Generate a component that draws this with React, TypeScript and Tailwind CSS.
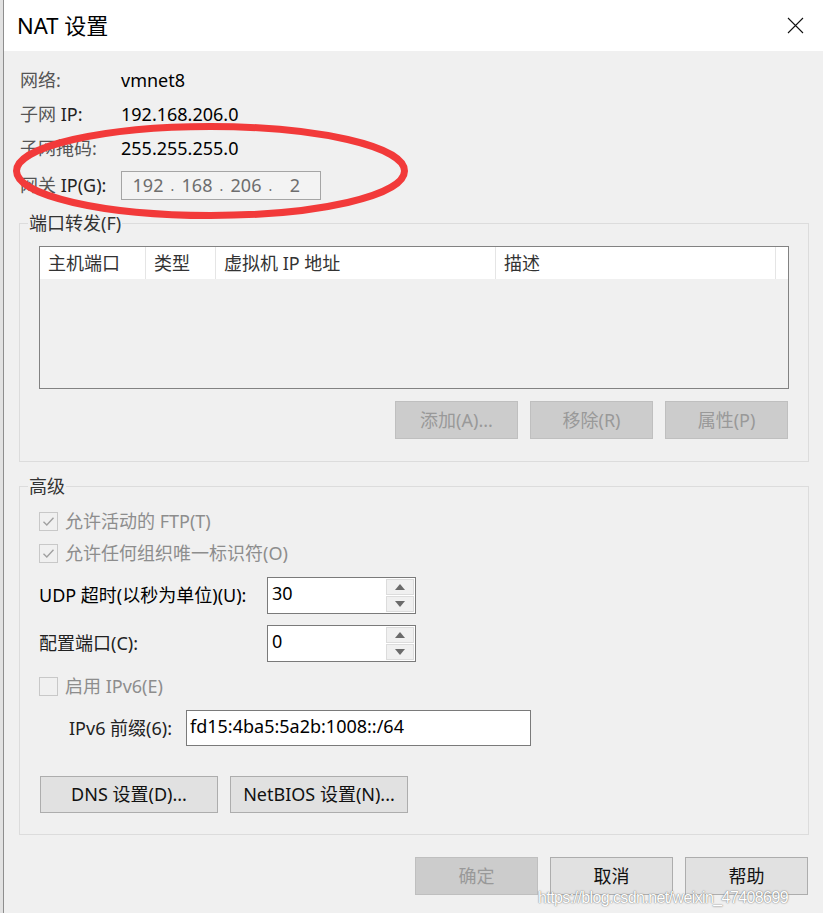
import React from "react";

const FONT = "font-['Noto_Sans','Noto_Sans_CJK_SC',sans-serif]";

function WinButton({ label, disabled, className = "" }: { label: string; disabled?: boolean; className?: string }) {
	return (
		<div
			className={`flex items-center justify-center border ${
				disabled
					? "border-[#bfbfbf] bg-[#cccccc] text-[#999]"
					: "border-[#adadad] bg-[#e1e1e1] text-[#111]"
			} ${className}`}
		>
			{label}
		</div>
	);
}

function CheckBox({ checked, label }: { checked?: boolean; label: string }) {
	return (
		<div className="flex h-[32px] items-center gap-[7px]">
			<div className="flex h-[19px] w-[19px] items-center justify-center border border-[#c8c8c8] bg-[#f0f0f0]">
				{checked && (
					<svg width="15" height="15" viewBox="0 0 15 15">
						<path d="M2.5 7.8 L5.8 11 L12.5 3.8" stroke="#a0a0a0" strokeWidth="1.4" fill="none" />
					</svg>
				)}
			</div>
			<span className="text-[#8d8d8d]">{label}</span>
		</div>
	);
}

function SpinBox({ value }: { value: string }) {
	return (
		<div className="flex h-[37px] w-[149px] border border-[#7a7a7a] bg-white">
			<div className="flex-1 pl-[4px] leading-[30px] text-black">{value}</div>
			<div className="flex w-[30px] flex-col gap-[1px] p-[1px]">
				<div className="flex flex-1 items-center justify-center border border-[#dcdcdc] bg-[#f0f0f0]">
					<svg width="10" height="6" viewBox="0 0 10 6">
						<path d="M0 6 L5 0 L10 6 Z" fill="#6a6a6a" />
					</svg>
				</div>
				<div className="flex flex-1 items-center justify-center border border-[#dcdcdc] bg-[#f0f0f0]">
					<svg width="10" height="6" viewBox="0 0 10 6">
						<path d="M0 0 L10 0 L5 6 Z" fill="#6a6a6a" />
					</svg>
				</div>
			</div>
		</div>
	);
}

function InfoRow({ label, value }: { label: React.ReactNode; value: string }) {
	return (
		<div className="flex h-[34px] items-center">
			<div className="w-[101px]">{label}</div>
			<div className="text-black">{value}</div>
		</div>
	);
}

const ipParts = ["192", "168", "206", "2"];
const columns = [
	{ name: "主机端口", w: "w-[106px]" },
	{ name: "类型", w: "w-[70px]" },
	{ name: "虚拟机 IP 地址", w: "w-[280px]" },
	{ name: "描述", w: "w-[280px]" },
];

export default function App() {
	return (
		<div className={`relative flex h-[913px] w-[823px] overflow-hidden bg-[#f0f0f0] text-[18px] ${FONT}`}>
			{/* window behind */}
			<div className="w-[3px] bg-[#e2e2e2]" />

			<div className="flex flex-1 flex-col border-l border-[#8e8e8e]">
				{/* title bar */}
				<div className="flex h-[51px] items-center justify-between bg-white pl-[13px] pr-[19px]">
					<span className="text-[22px] text-black">NAT 设置</span>
					<svg width="17" height="17" viewBox="0 0 17 17">
						<path d="M1 1 L16 16 M16 1 L1 16" stroke="#111" strokeWidth="1.1" />
					</svg>
				</div>

				<div className="flex flex-col pl-[15px] pt-[12px]">
					<div className="flex flex-col pl-[1px]">
						<InfoRow label={<span className="text-[#555]">网络:</span>} value="vmnet8" />
						<InfoRow
							label={
								<span>
									<span className="text-[#555]">子网 </span>
									<span className="text-[#222]">IP:</span>
								</span>
							}
							value="192.168.206.0"
						/>
						<InfoRow label={<span className="text-[#555]">子网掩码:</span>} value="255.255.255.0" />
						<div className="mt-[6px] flex h-[29px] items-center">
							<div className="w-[101px]">
								<span className="text-[#555]">网关 </span>
								<span className="text-[#222]">IP(G):</span>
							</div>
							<div className="flex h-[29px] w-[200px] items-center border border-[#a5a5a5] bg-[#f3f3f3] pl-[6px] text-[#6e6e6e]">
								{ipParts.map((p, i) => (
									<React.Fragment key={i}>
										<span className="w-[40px] text-center">{p}</span>
										{i < 3 && <span className="w-[9px] text-center text-[14px]">.</span>}
									</React.Fragment>
								))}
							</div>
						</div>
					</div>

					{/* port forwarding */}
					<fieldset className="mt-[11px] w-[790px] border border-[#dcdcdc]">
						<legend className="ml-[8px] px-[1px] leading-[24px] text-[#333]">端口转发(F)</legend>
						<div className="flex flex-col px-[19px] pb-[22px] pt-[11px]">
							<div className="flex h-[143px] flex-col border border-[#828282] bg-[#f0f0f0]">
								<div className="flex h-[32px] bg-white">
									{columns.map((c) => (
										<div
											key={c.name}
											className={`flex items-center border-r border-[#e5e5e5] pl-[8px] text-[#333] ${c.w}`}
										>
											{c.name}
										</div>
									))}
									<div className="flex-1" />
								</div>
							</div>
							<div className="mt-[12px] flex justify-end gap-[12px] pr-[1px]">
								<WinButton label="添加(A)..." disabled className="h-[38px] w-[123px]" />
								<WinButton label="移除(R)" disabled className="h-[38px] w-[123px]" />
								<WinButton label="属性(P)" disabled className="h-[38px] w-[123px]" />
							</div>
						</div>
					</fieldset>

					{/* advanced */}
					<fieldset className="mt-[12px] w-[790px] border border-[#dcdcdc]">
						<legend className="ml-[8px] px-[1px] leading-[24px] text-[#333]">高级</legend>
						<div className="flex flex-col px-[19px] pb-[21px] pt-[7px]">
							<CheckBox checked label="允许活动的 FTP(T)" />
							<CheckBox checked label="允许任何组织唯一标识符(O)" />
							<div className="mt-[8px] flex items-center">
								<div className="w-[228px] text-black">UDP 超时(以秒为单位)(U):</div>
								<SpinBox value="30" />
							</div>
							<div className="mt-[11px] flex items-center">
								<div className="w-[228px] text-[#222]">配置端口(C):</div>
								<SpinBox value="0" />
							</div>
							<div className="mt-[8px]">
								<CheckBox label="启用 IPv6(E)" />
							</div>
							<div className="mt-[8px] flex items-center pl-[30px]">
								<div className="w-[117px] text-[#222]">IPv6 前缀(6):</div>
								<div className="h-[36px] w-[345px] border border-[#7a7a7a] bg-white pl-[3px] leading-[30px] text-black">
									fd15:4ba5:5a2b:1008::/64
								</div>
							</div>
							<div className="mt-[30px] flex gap-[12px] pl-[1px]">
								<WinButton label="DNS 设置(D)..." className="h-[37px] w-[178px]" />
								<WinButton label="NetBIOS 设置(N)..." className="h-[37px] w-[178px]" />
							</div>
						</div>
					</fieldset>

					<div className="mt-[22px] flex w-[789px] justify-end gap-[12px]">
						<WinButton label="确定" disabled className="h-[38px] w-[123px]" />
						<WinButton label="取消" className="h-[38px] w-[123px]" />
						<WinButton label="帮助" className="h-[38px] w-[123px]" />
					</div>
				</div>
			</div>

			{/* red annotation */}
			<svg className="pointer-events-none absolute left-0 top-0" width="823" height="240" viewBox="0 0 823 240">
				<ellipse cx="210.5" cy="171" rx="194" ry="44.5" fill="none" stroke="#f23a3a" strokeWidth="7" />
			</svg>

			{/* watermark */}
			<div className="pointer-events-none absolute left-[538px] top-[886px] text-[16px] tracking-[-0.6px] text-white [text-shadow:0_0_1px_#6f6f6f,0_0_2px_#9a9a9a] font-['Liberation_Sans',sans-serif]">
				https://blog.csdn.net/weixin_47408699
			</div>
		</div>
	);
}
